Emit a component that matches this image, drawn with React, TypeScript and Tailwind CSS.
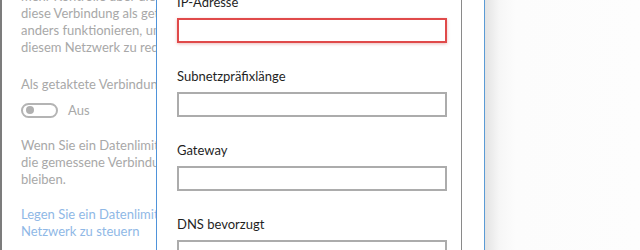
import React from "react";

function Field({ label, error }: { label: string; error?: boolean }) {
  return (
    <div className="flex flex-col">
      <div className="h-[20px] whitespace-nowrap text-[13px] leading-[20px] text-[#1f1f1f]">{label}</div>
      <div
        className={
          error
            ? "mt-[6px] h-[25px] w-[270px] border-2 border-[#e04a4a] bg-white shadow-[0_1px_3px_rgba(200,60,60,0.35)]"
            : "mt-[6px] h-[25px] w-[270px] border-2 border-[#acacac] bg-white"
        }
      />
    </div>
  );
}

export default function App() {
  return (
    <div
      className="flex h-[250px] w-[640px] overflow-hidden bg-white"
      style={{ fontFamily: 'Lato, "Noto Sans", sans-serif' }}
    >
      {/* background settings page (dimmed) */}
      <div className="w-[156px] shrink-0 overflow-hidden border-l-2 border-[#7c7c7c] pl-[19px] text-[13px] leading-[17px] text-[#a8a8a8]">
        <div className="-mt-[12px] whitespace-nowrap">
          <div>mehr Kontrolle über die</div>
          <div>diese Verbindung als get</div>
          <div>anders funktionieren, um</div>
          <div>diesem Netzwerk zu redu</div>
          <div className="mt-[20px]">Als getaktete Verbindung</div>
          <div className="mt-[9.5px] flex h-[15px] items-center">
            <div className="flex h-[15px] w-[37px] items-center rounded-full border-2 border-[#b4b4b4] pl-[3px]">
              <div className="h-[8px] w-[8px] rounded-full bg-[#b0b0b0]" />
            </div>
            <span className="ml-[10px]">Aus</span>
          </div>
          <div className="mt-[19px]">Wenn Sie ein Datenlimit</div>
          <div>die gemessene Verbindung</div>
          <div>bleiben.</div>
          <div className="mt-[18.5px] text-[#8fb8e6]">Legen Sie ein Datenlimit</div>
          <div className="text-[#8fb8e6]">Netzwerk zu steuern</div>
        </div>
      </div>

      {/* IP settings dialog */}
      <div className="w-[306px] shrink-0 border-l border-r-[1.5px] border-l-[#4f93da] border-r-[#8a8a8a] bg-white pl-[20px]">
        <div className="-mt-[8px] flex flex-col gap-[23px]">
          <Field label="IP-Adresse" error />
          <Field label="Subnetzpräfixlänge" />
          <Field label="Gateway" />
          <Field label="DNS bevorzugt" />
        </div>
      </div>

      <div className="w-[22px] shrink-0 bg-white" />

      {/* window behind */}
      <div className="flex-1 border-l border-[#5b9bd5] bg-[linear-gradient(to_right,#e3e3e3,#f6f6f6_14px,#fcfcfc_30px,#fdfdfd)]" />
    </div>
  );
}
